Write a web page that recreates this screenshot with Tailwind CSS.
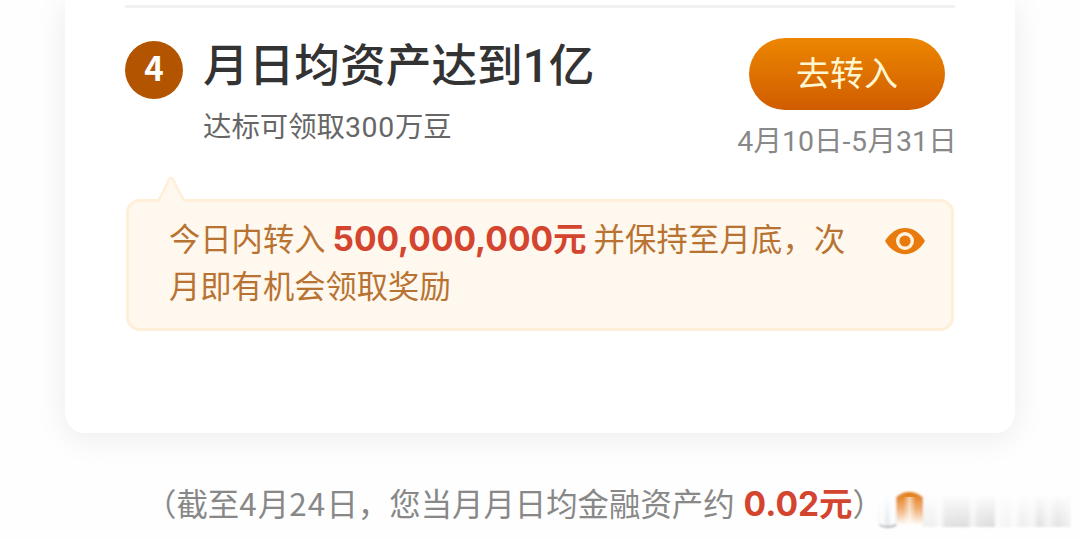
<!DOCTYPE html>
<html lang="zh-CN">
<head>
  <meta charset="UTF-8" />
  <title>月日均资产</title>
  <meta name="viewport" content="width=device-width, initial-scale=1.0" />
  <script src="https://cdn.jsdelivr.net/npm/@tailwindcss/browser@4"></script>
</head>
<body class="bg-[#fefefe] h-[539px] overflow-hidden font-['Noto_Sans_CJK_SC',sans-serif]">
  <main class="mx-[65px] h-[433px] px-[60px] pt-[5px] bg-white rounded-b-[20px] shadow-[0_4px_32px_rgba(0,0,0,0.08)]">
    <div class="h-[3px] bg-[#f1f1f1]"></div>

    <section class="flex h-[191px]">
      <div class="mt-[33px] size-[58px] shrink-0 rounded-full bg-[#b35400] text-white text-[33px] font-semibold leading-[53px] text-center">4</div>
      <div class="ml-[20px] mt-[25px] whitespace-nowrap">
        <h1 class="text-[45.7px] leading-[58px] font-medium text-[#333]">月日均资产达到<span class="font-['Roboto',sans-serif]">1</span>亿</h1>
        <p class="mt-[7px] text-[28.4px] leading-[44px] text-[#666]">达标可领取<span class="font-['Roboto',sans-serif] tracking-[0.7px]">300</span>万豆</p>
      </div>
      <div class="ml-auto mt-[30px] w-[220px] flex flex-col items-center whitespace-nowrap">
        <button class="w-[196px] h-[72px] ml-[4px] rounded-full bg-linear-to-b from-[#ec8600] to-[#d05c00] text-[#fff6d2] text-[34px] leading-[68px] pb-[4px]">去转入</button>
        <p class="mt-[8px] ml-[4px] text-[28.5px] leading-[42px] text-[#888]"><span class="font-['Roboto',sans-serif]">4</span>月<span class="font-['Roboto',sans-serif]">10</span>日<span class="font-['Roboto',sans-serif] tracking-[0.6px]">-5</span>月<span class="font-['Roboto',sans-serif]">31</span>日</p>
      </div>
    </section>

    <section class="relative mx-px h-[132px] pl-[40px] pr-[25px] pt-[13px] flex justify-between border-[3px] border-[#ffeed8] rounded-[14px] bg-[#fff8ee]">
      <!-- bubble tail -->
      <svg class="absolute left-[26px] -top-[27px]" width="34" height="30" viewBox="0 0 34 30">
        <path d="M3 30 L6 24 L14 5 Q16 1 18 5 L27 24 L31 30 Z" fill="#fff8ee" />
        <path d="M1 25.500 Q4 25.500 5.500 22 L14 4.500 Q16 1 18 4.500 L27 22 Q28.500 25.500 32 25.500" fill="none" stroke="#ffeed8" stroke-width="2.500" />
      </svg>
      <p class="text-[31.3px] leading-[46px] text-[#b87333] whitespace-nowrap">今日内转入 <b class="font-bold text-[33.500px] text-[#d4452f] font-['Inter','Noto_Sans_CJK_SC',sans-serif]">500,000,000元</b> <span class="tracking-[0.2px]">并保持至月底，次</span><br />月即有机会领取奖励</p>
      <svg class="mt-[12px]" width="42" height="28" viewBox="0 0 42 28">
        <path d="M1 14 C11 -3.500 31 -3.500 41 14 C31 31.500 11 31.500 1 14 Z" fill="#e97a0c" />
        <circle cx="21" cy="14" r="7.300" fill="#e97a0c" stroke="#fff3df" stroke-width="3.400" />
      </svg>
    </section>
  </main>

  <footer class="mt-[46px] ml-[145px] flex whitespace-nowrap">
    <p class="text-[31.4px] leading-[48px] text-[#888]">（截至<span class="tracking-[1.2px]">4</span>月<span class="tracking-[1.2px]">24</span>日，您当月月日均金融资产约 <b class="ml-[2px] font-bold text-[33.500px] text-[#d4452f] font-['Inter','Noto_Sans_CJK_SC',sans-serif]">0.02元</b>）</p>
  </footer>

  <!-- faded badge in the corner -->
  <svg class="absolute left-[870px] top-[485px]" width="210" height="50" viewBox="0 0 210 50">
    <defs>
      <filter id="soft"><feGaussianBlur stdDeviation="1" /></filter>
      <linearGradient id="fade" x1="0" y1="0" x2="0" y2="1">
        <stop offset="0" stop-color="#fff" stop-opacity="0.95" />
        <stop offset="1" stop-color="#fff" stop-opacity="0.1" />
      </linearGradient>
      <linearGradient id="orange" x1="0" y1="0" x2="0" y2="1">
        <stop offset="0" stop-color="#e0780f" />
        <stop offset="0.16" stop-color="#e58a30" />
        <stop offset="0.5" stop-color="#f0b27a" />
        <stop offset="0.95" stop-color="#fff" />
      </linearGradient>
      <linearGradient id="shine" x1="0" y1="0" x2="1" y2="0">
        <stop offset="0" stop-color="#fff" stop-opacity="0" />
        <stop offset="0.5" stop-color="#fff" stop-opacity="0.6" />
        <stop offset="1" stop-color="#fff" stop-opacity="0" />
      </linearGradient>
      <linearGradient id="bars" x1="0" y1="0" x2="1" y2="0">
        <stop offset="0" stop-color="#eee" />
        <stop offset="0.08" stop-color="#eee" />
        <stop offset="0.12" stop-color="#fafafa" />
        <stop offset="0.16" stop-color="#ddd" />
        <stop offset="0.3" stop-color="#d9d9d9" />
        <stop offset="0.34" stop-color="#f4f4f4" />
        <stop offset="0.38" stop-color="#dedede" />
        <stop offset="0.48" stop-color="#d8d8d8" />
        <stop offset="0.5" stop-color="#fafafa" />
        <stop offset="0.57" stop-color="#f1f1f1" />
        <stop offset="0.62" stop-color="#fafafa" />
        <stop offset="0.67" stop-color="#ebebeb" />
        <stop offset="0.74" stop-color="#f6f6f6" />
        <stop offset="0.79" stop-color="#dcdcdc" />
        <stop offset="0.85" stop-color="#f2f2f2" />
        <stop offset="0.91" stop-color="#dedede" />
        <stop offset="1" stop-color="#f0f0f0" />
      </linearGradient>
      <linearGradient id="glass" x1="0" y1="0" x2="1" y2="0">
        <stop offset="0" stop-color="#eee" />
        <stop offset="0.2" stop-color="#fff" />
        <stop offset="0.5" stop-color="#dfe5ea" />
        <stop offset="0.75" stop-color="#fff" />
        <stop offset="1" stop-color="#eee" />
      </linearGradient>
    </defs>
    <g filter="url(#soft)">
      <rect x="52" y="11" width="149" height="31" fill="url(#bars)" />
      <rect x="8" y="11" width="19" height="31" rx="2" fill="url(#glass)" />
      <rect x="6" y="9" width="197" height="33" fill="url(#fade)" />
      <path d="M10 40 Q17 44 26 40" fill="none" stroke="#b0b5bb" stroke-width="2" />
      <path d="M26 12 Q39 2 53 12 V42 H27 Z" fill="url(#orange)" />
    </g>
    <rect x="33" y="12" width="13" height="29" fill="url(#shine)" />
  </svg>
</body>
</html>
